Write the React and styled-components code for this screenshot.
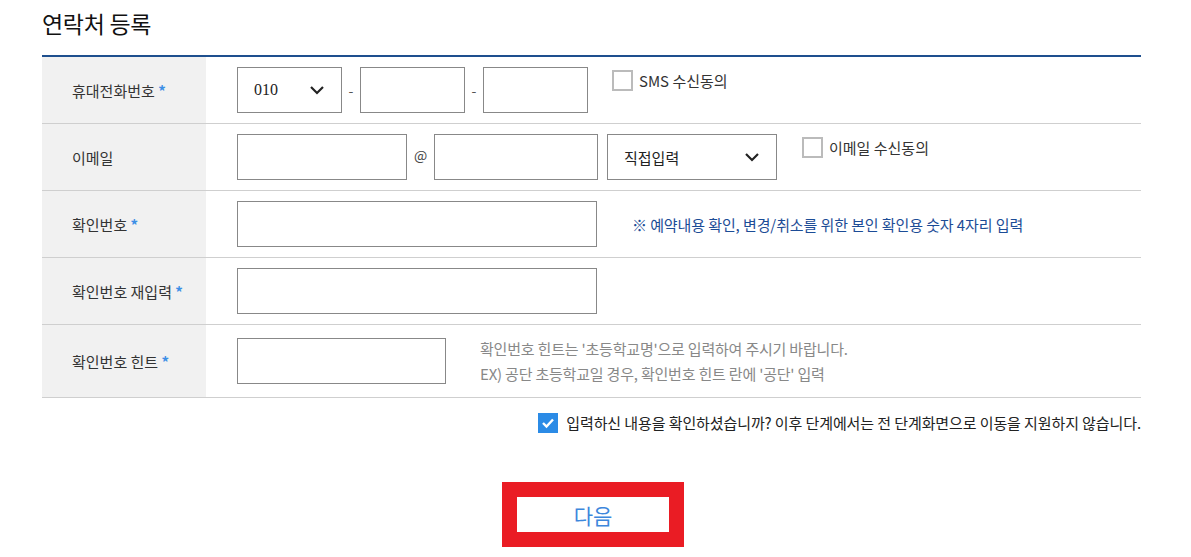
import React from "react";
import styled, { createGlobalStyle } from "styled-components";

const GlobalStyle = createGlobalStyle`
  body {
    margin: 0;
    background: #fff;
    font-family: "Noto Sans CJK KR", "Noto Sans", sans-serif;
    color: #333;
  }
`;

function Chevron() {
  return (
    <svg width="16" height="10" viewBox="0 0 16 10">
      <path d="M2 2 L8 8 L14 2" fill="none" stroke="#222" strokeWidth="2.2" />
    </svg>
  );
}

function Check() {
  return (
    <svg width="14" height="12" viewBox="0 0 14 12">
      <path d="M2 6 L5.5 9.5 L12 2.5" fill="none" stroke="#fff" strokeWidth="2.4" />
    </svg>
  );
}

export default function App() {
  return (
    <>
      <GlobalStyle />
      <Page>
        <Title>연락처 등록</Title>
        <Table>
          <Row>
            <Label>
              휴대전화번호 <Star>*</Star>
            </Label>
            <Cell>
              <Select $w={105}>
                <SelectValue $serif>010</SelectValue>
                <Chevron />
              </Select>
              <Sep>-</Sep>
              <Input $w={105} />
              <Sep>-</Sep>
              <Input $w={105} />
              <Agree $gap={24}>
                <Box />
                SMS 수신동의
              </Agree>
            </Cell>
          </Row>
          <Row>
            <Label>이메일</Label>
            <Cell>
              <Input $w={170} />
              <At>@</At>
              <Input $w={164} />
              <Select $w={170} $ml={9}>
                <SelectValue>직접입력</SelectValue>
                <Chevron />
              </Select>
              <Agree $gap={25}>
                <Box />
                이메일 수신동의
              </Agree>
            </Cell>
          </Row>
          <Row>
            <Label>
              확인번호 <Star>*</Star>
            </Label>
            <Cell>
              <Input $w={360} />
              <Note>※ 예약내용 확인, 변경/취소를 위한 본인 확인용 숫자 4자리 입력</Note>
            </Cell>
          </Row>
          <Row>
            <Label>
              확인번호 재입력 <Star>*</Star>
            </Label>
            <Cell>
              <Input $w={360} />
            </Cell>
          </Row>
          <Row $h={72}>
            <Label>
              확인번호 힌트 <Star>*</Star>
            </Label>
            <Cell>
              <Input $w={209} />
              <Hint>
                <p>확인번호 힌트는 '초등학교명'으로 입력하여 주시기 바랍니다.</p>
                <p>EX) 공단 초등학교일 경우, 확인번호 힌트 란에 '공단' 입력</p>
              </Hint>
            </Cell>
          </Row>
        </Table>
        <Confirm>
          <Checked>
            <Check />
          </Checked>
          입력하신 내용을 확인하셨습니까? 이후 단계에서는 전 단계화면으로 이동을 지원하지 않습니다.
        </Confirm>
        <Actions>
          <NextButton>다음</NextButton>
        </Actions>
      </Page>
    </>
  );
}

const Page = styled.div`
  width: 1099px;
  padding: 0 50px 0 42px;
`;

const Title = styled.h1`
  margin: 0;
  padding-top: 6px;
  height: 49px;
  font-size: 23px;
  font-weight: 400;
  color: #111;
  letter-spacing: -0.3px;
  line-height: 34px;
`;

const Table = styled.div`
  border-top: 2px solid #1e4f8e;
`;

const Row = styled.div`
  display: grid;
  grid-template-columns: 164px 1fr;
  height: ${(p) => p.$h || 66}px;
  border-bottom: 1px solid #cfcfcf;
`;

const Label = styled.div`
  background: #f1f1f1;
  display: flex;
  align-items: center;
  padding-left: 30px;
  font-size: 15px;
  color: #333;
  white-space: pre;
`;

const Star = styled.span`
  color: #3d8fe6;
  font-weight: 700;
`;

const Cell = styled.div`
  display: flex;
  align-items: center;
  padding-left: 31px;
`;

const Input = styled.div`
  box-sizing: border-box;
  width: ${(p) => p.$w}px;
  height: 46px;
  border: 1px solid #888;
  background: #fff;
  flex-shrink: 0;
`;

const Select = styled.div`
  box-sizing: border-box;
  width: ${(p) => p.$w}px;
  height: 46px;
  margin-left: ${(p) => p.$ml || 0}px;
  border: 1px solid #888;
  display: flex;
  align-items: center;
  justify-content: space-between;
  padding: 0 16px;
  flex-shrink: 0;
`;

const SelectValue = styled.span`
  font-size: ${(p) => (p.$serif ? 16 : 15)}px;
  font-family: ${(p) =>
    p.$serif ? `"Liberation Serif", serif` : `"Noto Sans CJK KR", sans-serif`};
  color: #222;
`;

const Sep = styled.span`
  width: 18px;
  text-align: center;
  font-size: 14px;
  color: #555;
`;

const At = styled.span`
  width: 27px;
  text-align: center;
  font-size: 14px;
  color: #444;
  margin-top: -4px;
`;

const Agree = styled.label`
  align-self: flex-start;
  margin-top: 13px;
  margin-left: ${(p) => p.$gap}px;
  display: flex;
  align-items: center;
  gap: 6px;
  font-size: 15px;
  color: #333;
`;

const Box = styled.span`
  box-sizing: border-box;
  width: 21px;
  height: 21px;
  border: 2px solid #bbb;
  background: #fff;
`;

const Note = styled.span`
  margin-left: 35px;
  font-size: 15px;
  color: #1c4c96;
  letter-spacing: -0.1px;
`;

const Hint = styled.div`
  margin-left: 34px;
  font-size: 15px;
  color: #888;
  letter-spacing: -0.2px;
  p {
    margin: 0;
    line-height: 25px;
  }
`;

const Confirm = styled.div`
  display: flex;
  justify-content: flex-end;
  align-items: center;
  gap: 8px;
  margin-top: 14px;
  font-size: 15px;
  color: #222;
  letter-spacing: -0.1px;
`;

const Checked = styled.span`
  width: 20px;
  height: 20px;
  background: #2b8be6;
  display: flex;
  align-items: center;
  justify-content: center;
`;

const Actions = styled.div`
  display: flex;
  justify-content: center;
  margin-top: 49px;
`;

const NextButton = styled.button`
  box-sizing: border-box;
  width: 182px;
  height: 65px;
  border: 15px solid #ea1c24;
  background: #fff;
  color: #3d87dc;
  font-family: "Noto Sans CJK KR", sans-serif;
  font-size: 21px;
  padding: 0;
  margin-left: 3px;
`;
